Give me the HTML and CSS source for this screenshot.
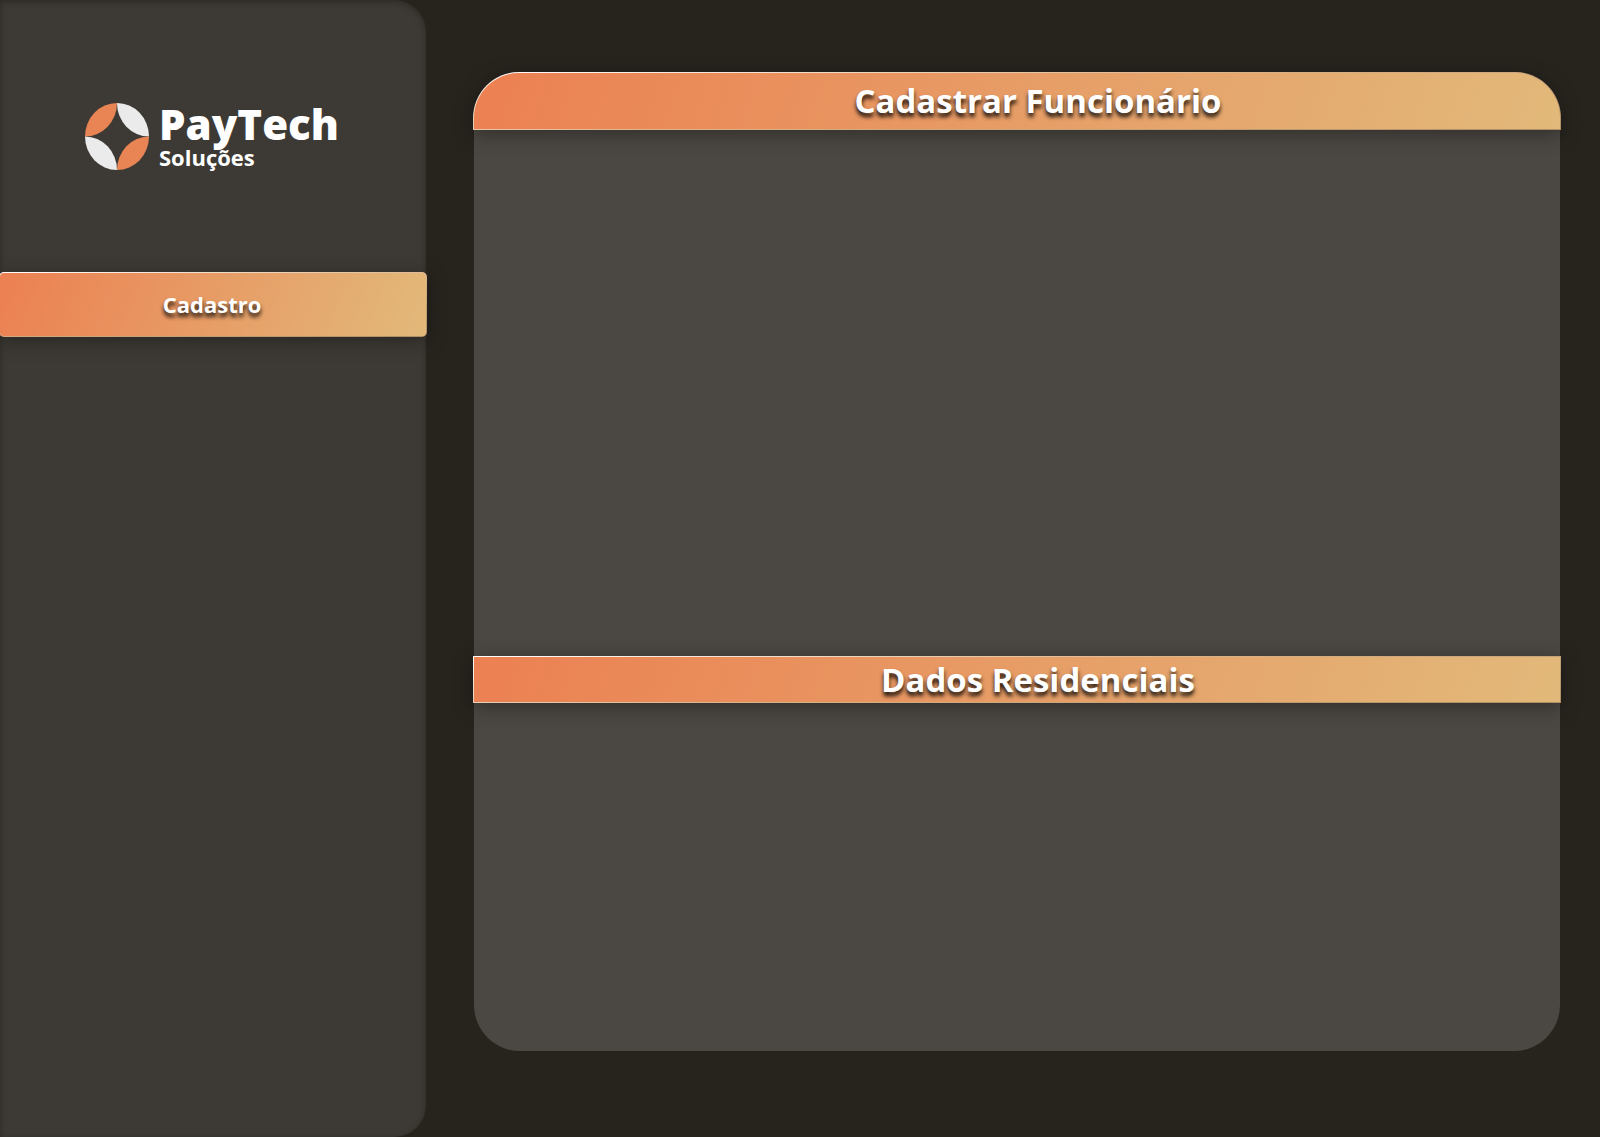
FILE: index.html
```html
<!DOCTYPE html>
<html lang="pt-BR">
<head>
<meta charset="utf-8">
<meta name="viewport" content="width=device-width, initial-scale=1">
<title>PayTech Soluções</title>
<link rel="stylesheet" href="styles.css">
</head>
<body>
<div class="layout">
  <aside class="sidebar">
    <div class="brand">
      <svg class="brand-mark" viewBox="0 0 64 67" aria-hidden="true">
        <path fill="#e98455" d="M32 0A32 33.500 0 0 0 0 33.500A32 33.500 0 0 0 32 0Z"/>
        <path fill="#ebebeb" d="M32 0A32 33.500 0 0 1 64 33.500A32 33.500 0 0 1 32 0Z"/>
        <path fill="#ebebeb" d="M0 33.500A32 33.500 0 0 0 32 67A32 33.500 0 0 0 0 33.500Z"/>
        <path fill="#e98455" d="M64 33.500A32 33.500 0 0 1 32 67A32 33.500 0 0 1 64 33.500Z"/>
      </svg>
      <div class="brand-text">
        <span class="brand-name">PayTech</span>
        <span class="brand-sub">Soluções</span>
      </div>
    </div>
    <nav class="menu">
      <button class="bar nav-button" type="button">Cadastro</button>
    </nav>
  </aside>
  <main class="content">
    <div class="panel">
      <h1 class="bar title title-top">Cadastrar Funcionário</h1>
      <section class="fields fields-employee"></section>
      <h2 class="bar title">Dados Residenciais</h2>
      <section class="fields fields-address"></section>
    </div>
  </main>
</div>
</body>
</html>
```
FILE: styles.css
```css
* {
  box-sizing: border-box;
}

body {
  margin: 0;
  background: #27241e;
  color: #fff;
  font-family: "Open Sans", sans-serif;
}

.layout {
  display: flex;
  min-height: 100vh;
}

.sidebar {
  flex: 0 0 426px;
  padding-top: 103px;
  background: #3d3a35;
  border-radius: 0 32px 32px 0;
  box-shadow: inset 0 2px 6px rgba(0, 0, 0, 0.3);
}

.brand {
  display: flex;
  gap: 10px;
  height: 169px;
  padding-left: 85px;
}

.brand-mark {
  width: 64px;
  height: 67px;
}

.brand-text {
  display: flex;
  flex-direction: column;
}

.brand-name {
  font-size: 42px;
  font-weight: 800;
  line-height: 42px;
}

.brand-sub {
  font-size: 22px;
  font-weight: 700;
  line-height: 24px;
}

.menu {
  margin: 0 -1px;
}

.bar {
  border: 1px solid transparent;
  background:
    linear-gradient(110deg, #ec8052, #e2b97a) padding-box,
    linear-gradient(174deg, #fff 0%, #dcb48c 45%, #b08e64 100%) border-box;
  box-shadow: 0 4px 20px rgba(0, 0, 0, 0.35);
  color: #fff;
  font-family: "Open Sans", sans-serif;
  font-weight: 700;
  text-align: center;
  text-shadow: 0 4px 4px rgba(0, 0, 0, 0.9);
}

.nav-button {
  display: block;
  width: 100%;
  height: 65px;
  padding: 0 2px 2px 0;
  border-radius: 5px;
  font-size: 22px;
}

.content {
  display: flex;
  flex: 1;
  padding: 72px 40px 86px 48px;
}

.panel {
  display: flex;
  flex: 1;
  flex-direction: column;
  background: #4b4742;
  border-radius: 46px;
}

.title {
  margin: 0 -1px;
  padding-left: 42px;
  font-size: 33px;
  line-height: 45px;
}

.title-top {
  border-radius: 46px 46px 0 0;
  line-height: 56px;
}

.fields-employee {
  flex: 526 0 0;
}

.fields-address {
  flex: 348 0 0;
}
```
